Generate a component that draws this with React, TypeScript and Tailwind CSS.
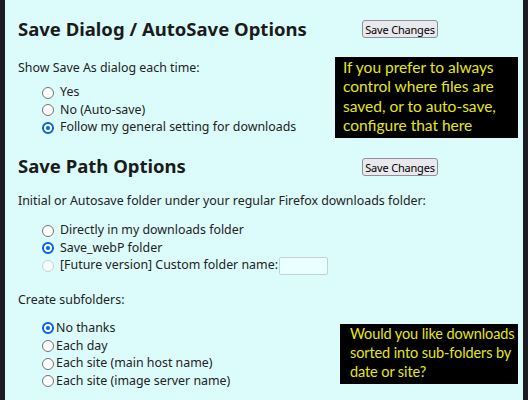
import React from 'react';

const Radio: React.FC<{ checked?: boolean; disabled?: boolean }> = ({ checked, disabled }) => {
    if (checked) {
        return (
            <span className="w-[12px] h-[12px] rounded-full border-[2px] border-[#0060df] bg-white flex items-center justify-center shrink-0">
                <span className="w-[4px] h-[4px] rounded-full bg-[#0060df]"></span>
            </span>
        );
    }
    return (
        <span
            className={
                disabled
                    ? 'w-[12px] h-[12px] rounded-full border border-[#c9d2d2] bg-[#f4fbfb] shrink-0'
                    : 'w-[12px] h-[12px] rounded-full border border-[#737373] bg-white shrink-0'
            }
        ></span>
    );
};

const SaveButton: React.FC = () => (
    <button className="h-[18px] w-[76px] px-0 bg-[#e9e9ed] border border-[#8f8f9d] rounded-[3px] text-[11px] leading-none text-black whitespace-nowrap tracking-[-0.2px]">
        Save Changes
    </button>
);

const Callout: React.FC<{ className: string; children: React.ReactNode }> = ({ className, children }) => (
    <div className={'bg-black text-[#e6e619] leading-[19.3px] font-["Lato"] whitespace-nowrap overflow-hidden ' + className}>{children}</div>
);

export default function App() {
    return (
        <div className="w-[528px] h-[400px] flex bg-[#1c1b22] overflow-hidden">
            <div className="w-[5px] shrink-0"></div>
            <div
                className="flex-1 bg-[#dcfcfc] text-[#222] pl-[13px] pr-[5px] text-[12.4px] overflow-hidden"
                style={{ fontFamily: '"Noto Sans", "Open Sans", sans-serif' }}
            >
                {/* Save dialog section */}
                <div className="flex items-center mt-[15px] h-[28px]">
                    <h1 className="w-[344px] text-[18.5px] font-bold text-[#1b1b1b]">Save Dialog / AutoSave Options</h1>
                    <SaveButton />
                </div>
                <div className="flex justify-between mt-[15px]">
                    <div>
                        <div className="h-[20px] leading-[20px]">Show Save As dialog each time:</div>
                        <div className="mt-[6px] pl-[24px]">
                            <div className="flex items-center gap-[6px] h-[17.5px]"><Radio />Yes</div>
                            <div className="flex items-center gap-[6px] h-[17.5px]"><Radio />No (Auto-save)</div>
                            <div className="flex items-center gap-[6px] h-[17.5px]"><Radio checked />Follow my general setting for downloads</div>
                        </div>
                    </div>
                    <Callout className="w-[183px] h-[81px] -mt-[1px] pl-[8px] pt-[1px] text-[15.5px]">
                        If you prefer to always<br />
                        control where files are<br />
                        saved, or to auto-save,<br />
                        configure that here
                    </Callout>
                </div>

                {/* Save path section */}
                <div className="flex items-center mt-[14px] h-[28px]">
                    <h1 className="w-[344px] text-[18.5px] font-bold text-[#1b1b1b]">Save Path Options</h1>
                    <div className="mt-[4px]"><SaveButton /></div>
                </div>
                <div className="h-[20px] leading-[20px] mt-[11px]">Initial or Autosave folder under your regular Firefox downloads folder:</div>
                <div className="mt-[11px] pl-[24px]">
                    <div className="flex items-center gap-[6px] h-[17.5px]"><Radio />Directly in my downloads folder</div>
                    <div className="flex items-center gap-[6px] h-[17.5px]"><Radio checked />Save_webP folder</div>
                    <div className="flex items-center gap-[6px] h-[17.5px]">
                        <Radio disabled />[Future version] Custom folder name:
                        <input className="w-[49px] h-[18px] -ml-[5px] bg-[#eaffff] border border-[#c3d3d3] rounded-[2px]" />
                    </div>
                </div>

                {/* Subfolder section */}
                <div className="flex justify-between mt-[15px]">
                    <div>
                        <div className="h-[20px] leading-[20px]">Create subfolders:</div>
                        <div className="mt-[10px] pl-[24px]">
                            <div className="flex items-center gap-[2px] h-[17.7px]"><Radio checked />No thanks</div>
                            <div className="flex items-center gap-[2px] h-[17.7px]"><Radio />Each day</div>
                            <div className="flex items-center gap-[2px] h-[17.7px]"><Radio />Each site (main host name)</div>
                            <div className="flex items-center gap-[2px] h-[17.7px]"><Radio />Each site (image server name)</div>
                        </div>
                    </div>
                    <Callout className="w-[178px] h-[60px] mt-[34px] pl-[10px] text-[14.5px] tracking-[-0.1px]">
                        Would you like downloads<br />
                        sorted into sub-folders by<br />
                        date or site?
                    </Callout>
                </div>
            </div>
            <div className="w-[5px] shrink-0"></div>
        </div>
    );
}
